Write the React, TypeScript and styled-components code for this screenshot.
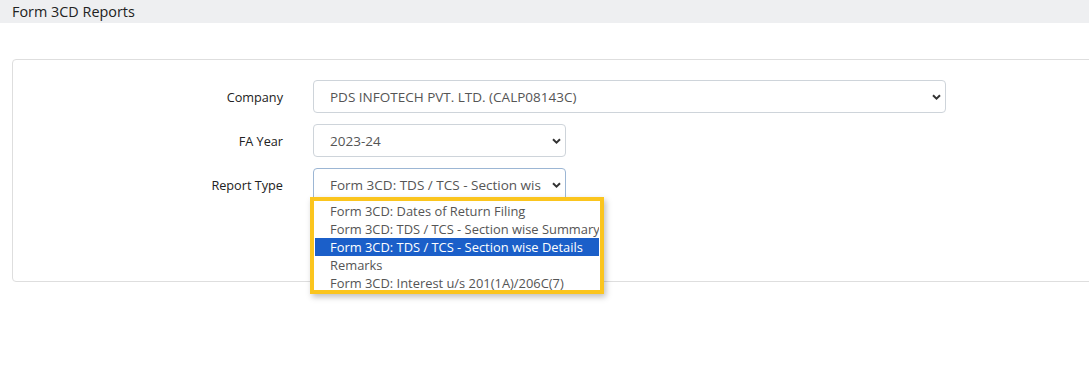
import React from "react";
import styled, { createGlobalStyle } from "styled-components";

const Global = createGlobalStyle`
  html, body { margin: 0; padding: 0; background: #fff; overflow: hidden; }
  body { font-family: "Open Sans", "Noto Sans", Arial, sans-serif; color: #212529; }
`;

const Page = styled.div`
  width: 1089px;
  height: 368px;
  overflow: hidden;
`;

const TitleBar = styled.div`
  height: 23px;
  background: #eeeff1;
  padding-left: 12px;
  display: flex;
  align-items: center;
  font-size: 14.4px;
  color: #222;
`;

const Body = styled.div`
  padding: 36px 0 0 12px;
`;

const Card = styled.div`
  width: 1100px;
  height: 223px;
  box-sizing: border-box;
  border: 1px solid #dedede;
  border-radius: 4px;
  padding-top: 20px;
  display: flex;
  flex-direction: column;
  gap: 11px;
`;

const Row = styled.div`
  display: grid;
  grid-template-columns: 270px auto;
  column-gap: 30px;
  align-items: center;
`;

const Label = styled.div`
  text-align: right;
  font-size: 12.7px;
  color: #222;
`;

const SelectWrap = styled.div<{ $w: number }>`
  position: relative;
  width: ${(p) => p.$w}px;
`;

const Select = styled.div<{ $focus?: boolean }>`
  height: 33px;
  box-sizing: border-box;
  border: 1px solid ${(p) => (p.$focus ? "#9cb6d4" : "#ced4da")};
  border-radius: 4px;
  background: #fff;
  display: flex;
  align-items: center;
  padding: 0 4px 0 16px;
  gap: 11px;
  font-size: 13.5px;
  color: #555;
`;

const Value = styled.span`
  flex: 1;
  white-space: nowrap;
  overflow: hidden;
`;

const ChevronIcon = styled.svg`
  flex: none;
  margin-top: 1px;
`;

const Chevron = () => (
  <ChevronIcon width="9" height="6" viewBox="0 0 9 6">
    <path d="M1 1.2 L4.5 4.6 L8 1.2" fill="none" stroke="#333" strokeWidth="2" />
  </ChevronIcon>
);

const Dropdown = styled.div`
  position: absolute;
  left: -3px;
  top: 29px;
  width: 294px;
  height: 97px;
  box-sizing: border-box;
  border: 4px solid #fbc51e;
  background: #fff;
  box-shadow: 2px 3px 6px rgba(0, 0, 0, 0.25);
  padding: 1px;
  overflow: hidden;
  z-index: 2;
`;

const Option = styled.div<{ $sel?: boolean }>`
  height: 18px;
  line-height: 18px;
  padding-left: 15px;
  font-size: 12.9px;
  white-space: nowrap;
  overflow: hidden;
  color: ${(p) => (p.$sel ? "#fff" : "#555")};
  background: ${(p) => (p.$sel ? "#1b5fc9" : "transparent")};
`;

const options = [
  "Form 3CD: Dates of Return Filing",
  "Form 3CD: TDS / TCS - Section wise Summary",
  "Form 3CD: TDS / TCS - Section wise Details",
  "Remarks",
  "Form 3CD: Interest u/s 201(1A)/206C(7)",
];

export default function App() {
  return (
    <Page>
      <Global />
      <TitleBar>Form 3CD Reports</TitleBar>
      <Body>
        <Card>
          <Row>
            <Label>Company</Label>
            <SelectWrap $w={633}>
              <Select>
                <Value>PDS INFOTECH PVT. LTD. (CALP08143C)</Value>
                <Chevron />
              </Select>
            </SelectWrap>
          </Row>
          <Row>
            <Label>FA Year</Label>
            <SelectWrap $w={253}>
              <Select>
                <Value>2023-24</Value>
                <Chevron />
              </Select>
            </SelectWrap>
          </Row>
          <Row>
            <Label>Report Type</Label>
            <SelectWrap $w={253}>
              <Select $focus>
                <Value>Form 3CD: TDS / TCS - Section wise Details</Value>
                <Chevron />
              </Select>
              <Dropdown>
                {options.map((o, i) => (
                  <Option key={o} $sel={i === 2}>
                    {o}
                  </Option>
                ))}
              </Dropdown>
            </SelectWrap>
          </Row>
        </Card>
      </Body>
    </Page>
  );
}
